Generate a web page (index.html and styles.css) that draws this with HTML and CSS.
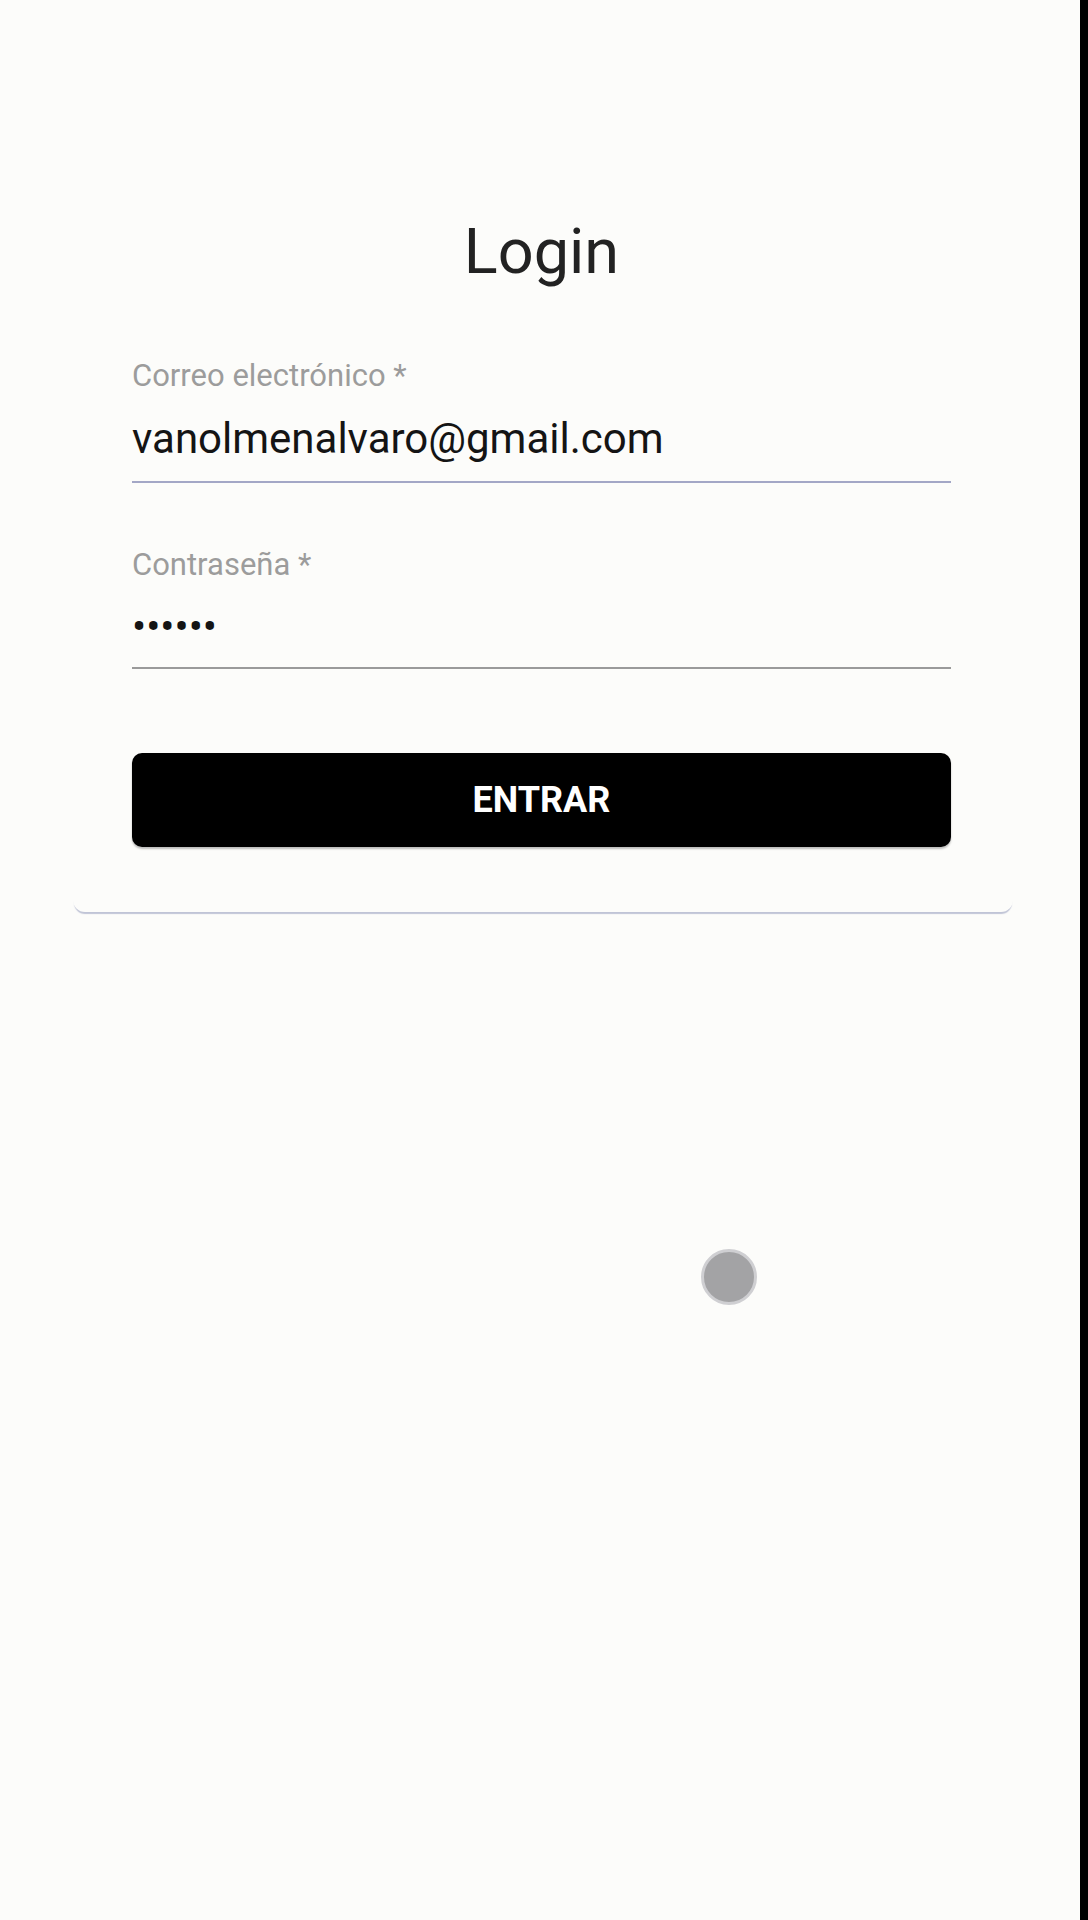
FILE: index.html
```html
<!DOCTYPE html>
<html lang="es">
<head>
<meta charset="utf-8">
<title>Login</title>
<link rel="stylesheet" href="styles.css">
</head>
<body>
<div class="screen">
  <main class="page">
    <section class="card">
      <h1 class="title">Login</h1>
      <div class="field">
        <div class="label">Correo electrónico *</div>
        <div class="input focused">vanolmenalvaro@gmail.com</div>
      </div>
      <div class="field">
        <div class="label">Contraseña *</div>
        <div class="input password">••••••</div>
      </div>
      <button class="btn" type="button">ENTRAR</button>
    </section>
    <div class="touch"></div>
  </main>
  <div class="edge"></div>
</div>
</body>
</html>
```
FILE: styles.css
```css
html, body {
  margin: 0;
  padding: 0;
}
body {
  background: #fcfcfa;
  font-family: Roboto, "Noto Sans", "Liberation Sans", sans-serif;
}
.screen {
  display: flex;
  width: 1088px;
  height: 1920px;
}
.page {
  position: relative;
  flex: 1;
  background: #fcfcfa;
}
.edge {
  width: 8px;
  background: #000;
}
.card {
  margin-left: 73px;
  width: 940px;
  box-sizing: border-box;
  padding: 210px 62px 65px 59px;
  border-radius: 0 0 12px 12px;
  box-shadow: 0 3px 1px -1px rgba(120, 128, 170, 0.45);
}
.title {
  margin: 0 0 66px;
  text-align: center;
  font-size: 63px;
  font-weight: 400;
  line-height: 84px;
  color: #222;
}
.field {
  display: flex;
  flex-direction: column;
  margin-bottom: 66px;
}
.field + .field {
  margin-bottom: 84px;
}
.label {
  font-size: 31px;
  line-height: 31.5px;
  color: #9c9c9c;
  margin-bottom: 17px;
}
.input {
  font-size: 42px;
  line-height: 60px;
  height: 60px;
  color: #141414;
  padding-bottom: 12px;
  border-bottom: 2px solid #9a9a9a;
}
.input.focused {
  border-bottom-color: #a3a7c6;
}
.input.password {
  padding-bottom: 9.5px;
}
.btn {
  display: block;
  width: 100%;
  height: 94px;
  border: none;
  border-radius: 10px;
  background: #000;
  color: #fff;
  font-family: Roboto, "Noto Sans", "Liberation Sans", sans-serif;
  font-size: 36px;
  font-weight: 700;
  letter-spacing: 0;
  box-shadow: 0 2px 2px rgba(0, 0, 0, 0.25);
}
.touch {
  position: absolute;
  left: 701px;
  top: 1249px;
  width: 50px;
  height: 50px;
  border-radius: 50%;
  background: #a3a3a5;
  border: 3px solid #cfcfd2;
}
```
